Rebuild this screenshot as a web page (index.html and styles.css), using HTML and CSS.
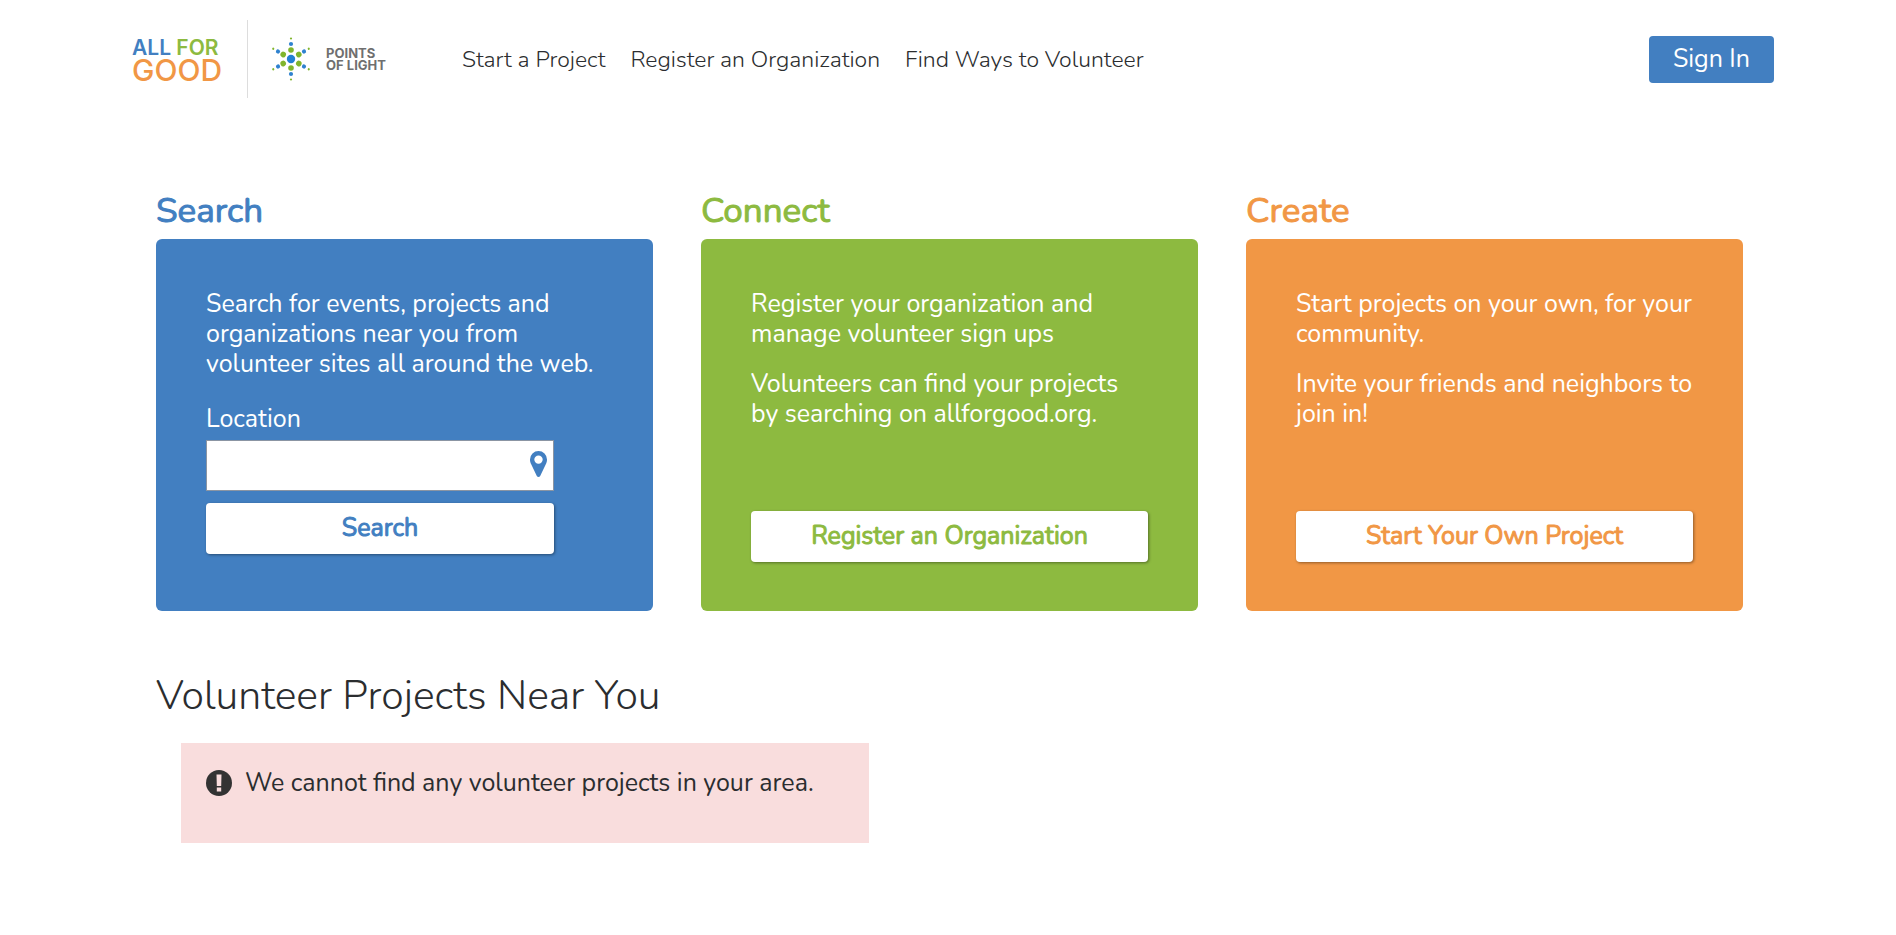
FILE: index.html
```html
<!DOCTYPE html>
<html lang="en">
<head>
  <meta charset="utf-8">
  <title>All For Good</title>
  <meta name="viewport" content="width=device-width, initial-scale=1">
  <link rel="stylesheet" href="styles.css">
</head>
<body>
  <header class="header">
    <a class="brand" href="#">
      <span class="brand-top"><span class="brand-all">ALL</span> <span class="brand-for">FOR</span></span>
      <span class="brand-good">GOOD</span>
    </a>
    <a class="partner" href="#">
      <svg class="partner-star" viewBox="-22 -22 44 44" aria-hidden="true">
        <defs>
          <g id="ray">
            <circle cy="-9" r="2.8" fill="#80b52c"/>
            <circle cy="-15" r="2.1" fill="#2f82cf"/>
            <circle cy="-20.500" r="1.100" fill="#80b52c"/>
          </g>
        </defs>
        <circle r="4.200" fill="#2380d3"/>
        <use href="#ray"/>
        <use href="#ray" transform="rotate(60)"/>
        <use href="#ray" transform="rotate(120)"/>
        <use href="#ray" transform="rotate(180)"/>
        <use href="#ray" transform="rotate(240)"/>
        <use href="#ray" transform="rotate(300)"/>
      </svg>
      <span class="partner-name">POINTS<br>OF LIGHT</span>
    </a>
    <nav class="nav">
      <a href="#">Start a Project</a>
      <a href="#">Register an Organization</a>
      <a href="#">Find Ways to Volunteer</a>
    </nav>
    <button class="sign-in" type="button">Sign In</button>
  </header>

  <main class="main">
    <div class="cards">
      <section class="column blue">
        <h2 class="column-title">Search</h2>
        <form class="card">
          <p>Search for events, projects and organizations near you from volunteer sites all around the web.</p>
          <div class="search">
            <label for="location">Location</label>
            <div class="field">
              <input id="location" type="text">
              <svg class="pin" viewBox="0 0 17 26" aria-hidden="true">
                <path fill="currentColor" fill-rule="evenodd" d="M8.500 0A8.500 8.500 0 0 0 0 8.500c0 2 .5 3.300 1.200 4.800l5.600 11.600c.7 1.400 2.700 1.400 3.400 0l5.600-11.600c.7-1.500 1.200-2.800 1.200-4.800A8.500 8.500 0 0 0 8.500 0zm0 4.400a4.200 4.200 0 1 1 0 8.400 4.200 4.200 0 0 1 0-8.400z"/>
              </svg>
            </div>
            <button class="action" type="button">Search</button>
          </div>
        </form>
      </section>
      <section class="column green">
        <h2 class="column-title">Connect</h2>
        <div class="card">
          <p>Register your organization and manage volunteer sign ups</p>
          <p>Volunteers can find your projects by searching on allforgood.org.</p>
          <button class="action action-bottom" type="button">Register an Organization</button>
        </div>
      </section>
      <section class="column orange">
        <h2 class="column-title">Create</h2>
        <div class="card">
          <p>Start projects on your own, for your community.</p>
          <p>Invite your friends and neighbors to join in!</p>
          <button class="action action-bottom" type="button">Start Your Own Project</button>
        </div>
      </section>
    </div>

    <h1 class="nearby-title">Volunteer Projects Near You</h1>
    <div class="alert" role="alert">
      <svg class="alert-icon" viewBox="0 0 26 26" aria-hidden="true">
        <circle cx="13" cy="13" r="13" fill="#333"/>
        <path fill="#f9dddd" d="M10.500 4.500h5l-.3 11.500h-4.400zM10.800 17.500h4.400v4h-4.400z"/>
      </svg>
      <span>We cannot find any volunteer projects in your area.</span>
    </div>
  </main>
</body>
</html>
```
FILE: styles.css
```css
* {
  box-sizing: border-box;
}

body {
  margin: 0;
  background: #fff;
  color: #2b2d2f;
  font: 25px/30px Nunito, Lato, sans-serif;
}

a {
  color: inherit;
  text-decoration: none;
}

button,
input {
  font: inherit;
}

button {
  cursor: pointer;
}

.header {
  display: flex;
  align-items: center;
  padding: 20px 122px 20px 132px;
}

.brand,
.partner {
  display: flex;
  height: 78px;
  font-family: Inter, sans-serif;
}

.brand {
  flex-direction: column;
  justify-content: center;
  padding-right: 25px;
  border-right: 1px solid #ddd;
  font-weight: 600;
}

.brand-top {
  font-size: 21px;
  line-height: 21px;
}

.brand-good {
  color: #f19745;
  font-size: 30px;
  font-weight: 500;
  line-height: 24px;
}

.brand-all {
  color: #427fc1;
}

.brand-for {
  color: #8dba40;
}

.partner {
  align-items: center;
  gap: 13px;
  padding-left: 21px;
  color: #6f6f6f;
  font-size: 13px;
  font-weight: 700;
  line-height: 12px;
}

.partner-star {
  width: 44px;
  height: 44px;
}

.nav {
  display: flex;
  gap: 25px;
  margin-left: 76px;
  padding-top: 1px;
  font-size: 23px;
  font-weight: 300;
}

.sign-in {
  margin-left: auto;
  padding: 8px 24px 9px;
  border: 0;
  border-radius: 4px;
  background: #427fc1;
  color: #fff;
}

.main {
  padding: 71px 153px 40px 156px;
}

.cards {
  display: grid;
  grid-template-columns: repeat(3, 1fr);
  gap: 48px;
}

.column {
  display: flex;
  flex-direction: column;
}

.column-title {
  margin: 0 0 6px;
  color: var(--accent);
  font-size: 35px;
  font-weight: 400;
  line-height: 44px;
  -webkit-text-stroke: 1px;
}

.blue {
  --accent: #427fc1;
}

.green {
  --accent: #8dba40;
}

.orange {
  --accent: #f19745;
}

.card {
  display: flex;
  flex: 1;
  flex-direction: column;
  min-height: 372px;
  padding: 50px 50px 49px;
  border-radius: 6px;
  background: var(--accent);
  color: #fff;
}

.card p {
  margin: 0 0 20px;
}

.search {
  display: flex;
  flex-direction: column;
  width: 348px;
  max-width: 100%;
  padding-top: 5px;
}

.field {
  position: relative;
  margin: 6px 0 12px;
}

.field input {
  display: block;
  width: 100%;
  height: 51px;
  padding: 0 40px 0 10px;
  border: 1px solid #8b95a3;
  background: #fff;
}

.pin {
  position: absolute;
  top: 11px;
  right: 7px;
  width: 17px;
  height: 26px;
  color: #427fc1;
}

.action {
  height: 51px;
  padding: 0 6px 1px;
  border: 0;
  border-radius: 4px;
  background: #fff;
  box-shadow: 1px 1px 3px rgba(0, 0, 0, 0.4);
  color: var(--accent);
  -webkit-text-stroke: 1px;
}

.action-bottom {
  margin-top: auto;
}

.nearby-title {
  margin: 61px 0 23px;
  font-size: 41px;
  font-weight: 300;
  line-height: 48px;
}

.alert {
  display: flex;
  gap: 13px;
  max-width: 688px;
  min-height: 100px;
  margin-left: 25px;
  padding: 25px;
  background: #f9dddd;
}

.alert-icon {
  flex: none;
  width: 26px;
  height: 30px;
}
```
